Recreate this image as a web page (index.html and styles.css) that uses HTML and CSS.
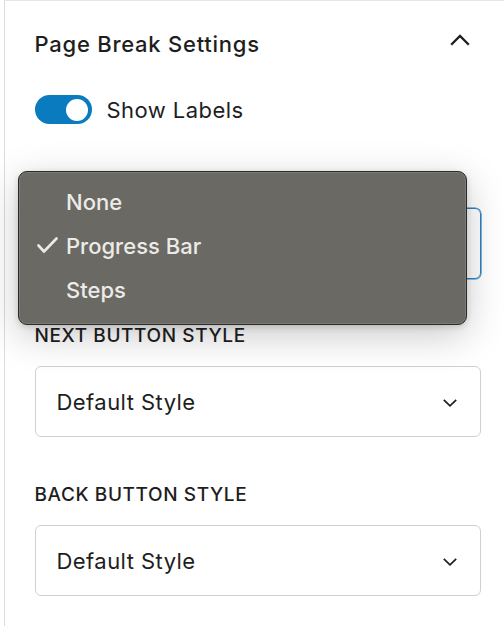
FILE: index.html
```html
<!DOCTYPE html>
<html>
<head>
<meta charset="utf-8">
<link rel="stylesheet" href="styles.css">
</head>
<body>
<div class="panel">
  <div class="header">
    <span class="title">Page Break Settings</span>
    <svg class="chev-up" width="20" height="12" viewBox="0 0 20 12"><path d="M1.2 10.8 L10 2 L18.8 10.8" fill="none" stroke="#1e1e1e" stroke-width="2.3"/></svg>
  </div>
  <div class="toggle-row">
    <span class="toggle"><span class="thumb"></span></span>
    <span class="toggle-label">Show Labels</span>
  </div>
  <div class="group first">
    <div class="label">&nbsp;</div>
    <div class="select focused"><span></span>
      <svg class="chev-down" width="14" height="8" viewBox="0 0 14 8"><path d="M0.8 0.8 L7 6.8 L13.2 0.8" fill="none" stroke="#1e1e1e" stroke-width="1.7"/></svg>
    </div>
  </div>
  <div class="group second">
    <div class="label">NEXT BUTTON STYLE</div>
    <div class="select"><span>Default Style</span>
      <svg class="chev-down" width="14" height="8" viewBox="0 0 14 8"><path d="M0.8 0.8 L7 6.8 L13.2 0.8" fill="none" stroke="#1e1e1e" stroke-width="1.7"/></svg>
    </div>
  </div>
  <div class="group">
    <div class="label">BACK BUTTON STYLE</div>
    <div class="select"><span>Default Style</span>
      <svg class="chev-down" width="14" height="8" viewBox="0 0 14 8"><path d="M0.8 0.8 L7 6.8 L13.2 0.8" fill="none" stroke="#1e1e1e" stroke-width="1.7"/></svg>
    </div>
  </div>

  <div class="popup">
    <div class="item">None</div>
    <div class="item checked">
      <svg class="check" width="21" height="16" viewBox="0 0 21 16"><path d="M1.5 8.5 L7 14.5 L19.5 1.5" fill="none" stroke="#ecebe8" stroke-width="2.6" stroke-linecap="round" stroke-linejoin="round"/></svg>
      Progress Bar</div>
    <div class="item">Steps</div>
  </div>
</div>
</body>
</html>
```

FILE: styles.css
```css
html, body {
  margin: 0;
  padding: 0;
  background: #ffffff;
}
body {
  font-family: Inter, "Noto Sans", "DejaVu Sans", sans-serif;
  color: #1e1e1e;
  width: 504px;
  height: 626px;
  overflow: hidden;
}
.panel {
  position: relative;
  margin-left: 4px;
  height: 625px;
  border-left: 1.5px solid #dcdcdc;
  border-top: 1px solid #e6e6e6;
  padding: 0 23px 0 29.5px;
}
.header {
  display: flex;
  align-items: center;
  justify-content: space-between;
  height: 28px;
  margin-top: 29px;
}
.title {
  font-size: 22px;
  line-height: 28px;
  font-weight: 500;
  letter-spacing: 0.75px;
}
.chev-up {
  margin-right: 11px;
  margin-top: -8px;
}
.toggle-row {
  display: flex;
  align-items: center;
  gap: 15px;
  margin-top: 37px;
  height: 29px;
}
.toggle {
  position: relative;
  width: 57px;
  height: 29px;
  border-radius: 15px;
  background: #0a7bbf;
  flex: none;
}
.thumb {
  position: absolute;
  right: 3.5px;
  top: 3.5px;
  width: 22px;
  height: 22px;
  border-radius: 50%;
  background: #fff;
}
.toggle-label {
  font-size: 22px;
  line-height: 28px;
  letter-spacing: 0.45px;
}
.group {
  margin-top: 46px;
}
.group.first {
  margin-top: 41px;
}
.group.first .label {
  margin-bottom: 19px;
}
.group.second {
  margin-top: 45px;
}
.label {
  font-size: 19px;
  line-height: 24px;
  font-weight: 500;
  letter-spacing: 0.6px;
  margin-bottom: 18px;
}
.select {
  box-sizing: border-box;
  height: 71px;
  border: 1px solid #d0d0d4;
  border-radius: 6px;
  display: flex;
  align-items: center;
  justify-content: space-between;
  padding: 0 23px 0 21px;
  font-size: 22px;
  line-height: 28px;
  letter-spacing: 0.45px;
}
.select.focused {
  border-color: #2f80c2;
  box-shadow: 0 0 0 0.6px #2f80c2;
}
.chev-down {
  margin-top: 2px;
}
.popup {
  position: absolute;
  left: 13px;
  top: 170px;
  width: 449px;
  box-sizing: border-box;
  padding: 8px 0 12px 0;
  background: #6a6964;
  border: 1px solid #2a2a29;
  border-radius: 9px;
  box-shadow: inset 0 0 0 1px rgba(255,255,255,0.12), 0 10px 38px rgba(0,0,0,0.22), 0 2px 6px rgba(0,0,0,0.15);
}
.item {
  position: relative;
  height: 44px;
  line-height: 44px;
  padding-left: 47px;
  font-size: 22px;
  font-weight: 500;
  color: #ecebe8;
}
.check {
  position: absolute;
  left: 18px;
  top: 13px;
}
```
